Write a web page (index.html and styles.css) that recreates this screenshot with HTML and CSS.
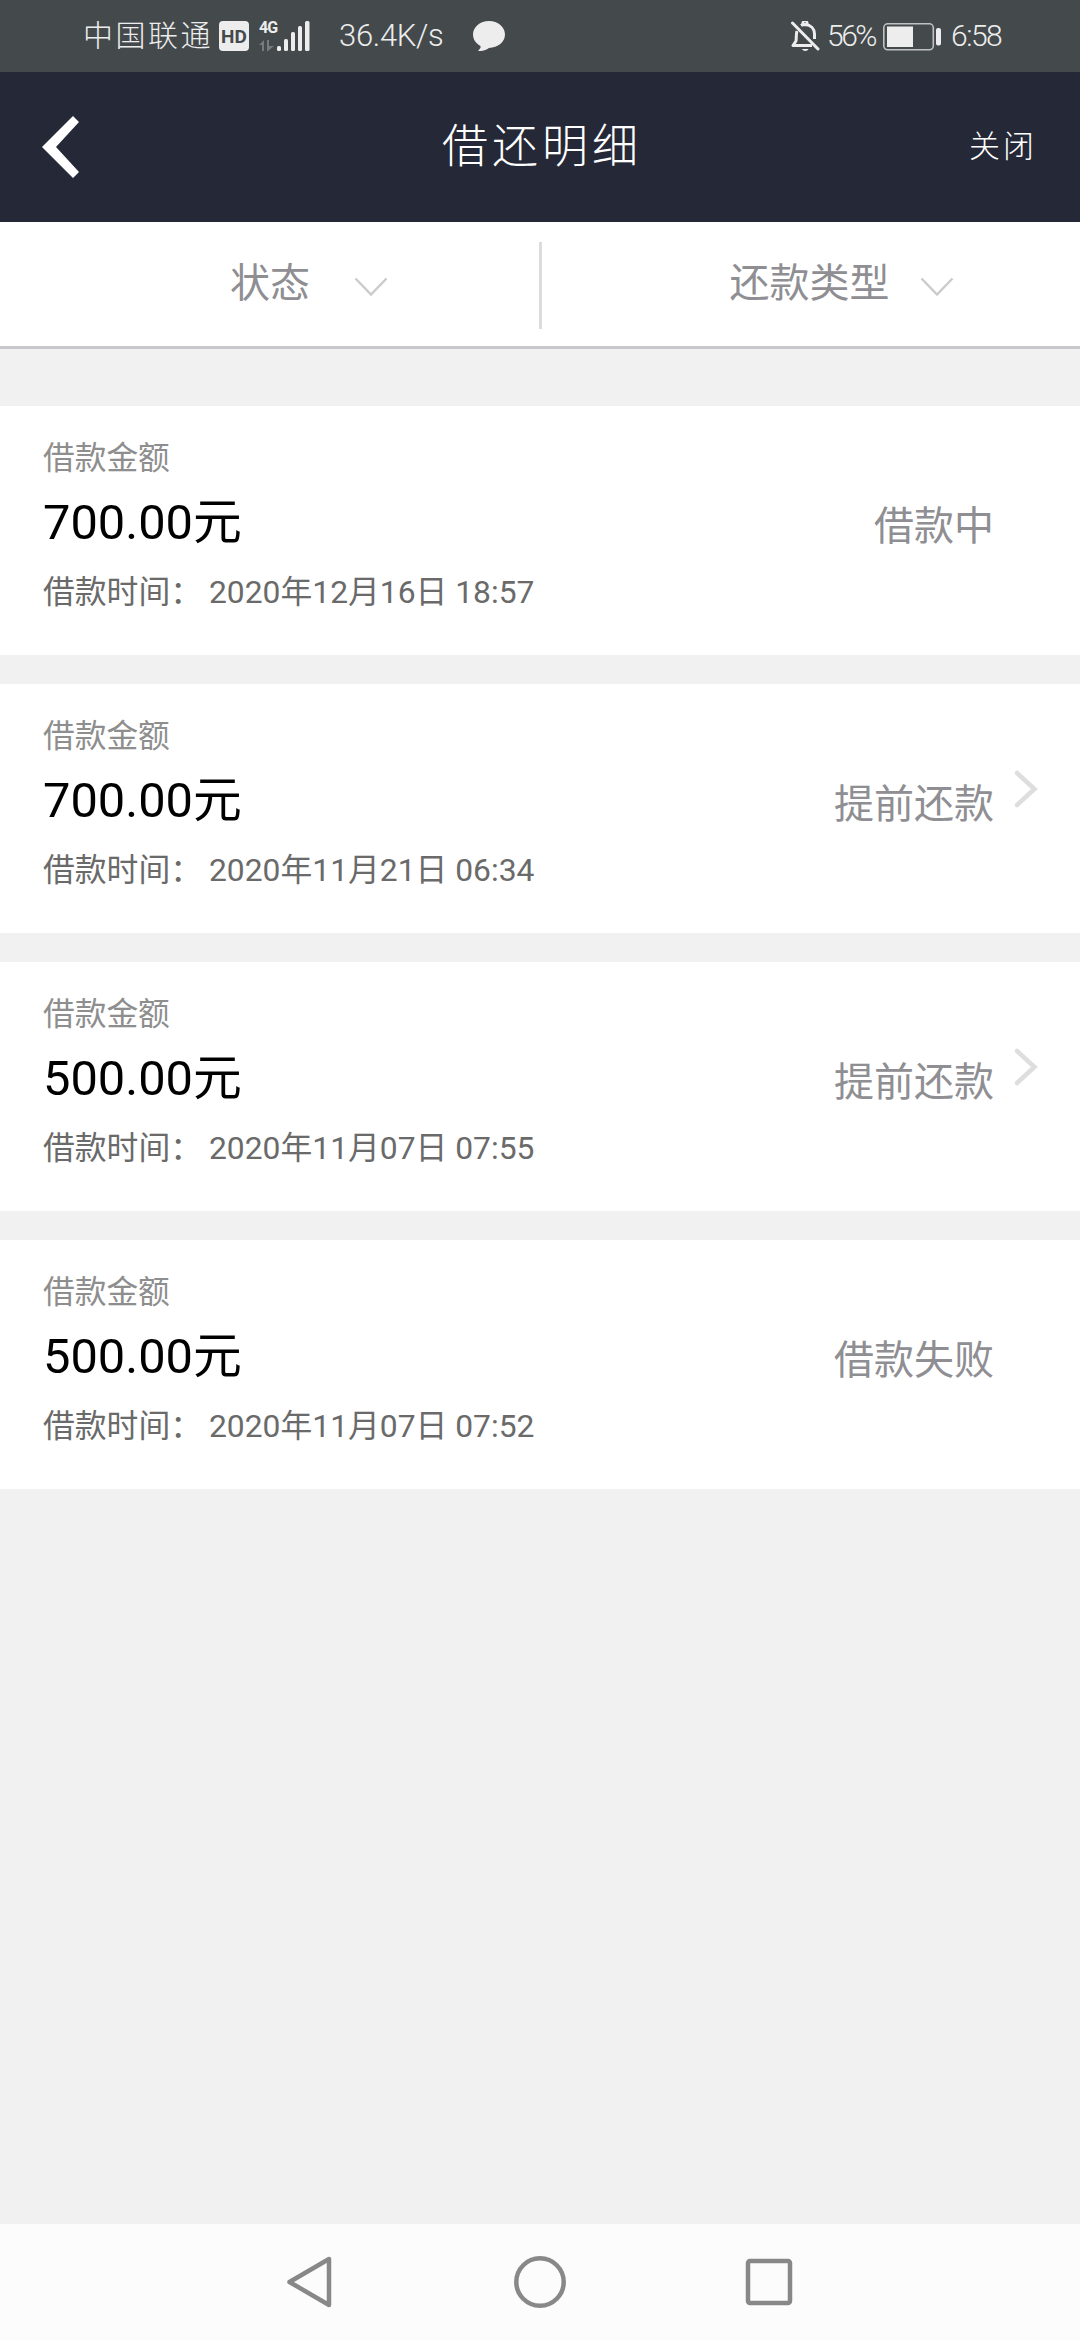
FILE: index.html
```html
<!DOCTYPE html>
<html lang="zh-CN">
<head>
    <meta charset="UTF-8">
    <meta name="viewport" content="width=device-width, initial-scale=1.0">
    <title>借还明细</title>
    <link rel="stylesheet" href="styles.css">
</head>
<body>
    <!-- Status Bar -->
    <div class="status-bar">
        <span class="carrier">中国联通</span>
        <span class="hd">HD</span>
        <div class="signal">
            <div class="network">
                <span class="network-type">4G</span>
                <svg class="data-arrows" width="15" height="11" viewBox="0 0 15 11">
                    <path d="M0 5L5 0V11H3V5ZM8 0H10V6H15L9 11H8Z" fill="#777b7d"/>
                </svg>
            </div>
            <svg class="bars" width="33" height="30" viewBox="0 0 33 30" fill="#ededed">
                <rect x="0" y="25" width="4" height="5" rx="1.5"/>
                <rect x="7" y="18" width="4" height="12" rx="1.5"/>
                <rect x="14" y="11" width="4" height="19" rx="1.5"/>
                <rect x="21" y="5" width="4" height="25" rx="1.5"/>
                <rect x="28" y="0" width="4.5" height="30" rx="1.5"/>
            </svg>
        </div>
        <span class="speed">36.4K/s</span>
        <svg class="bubble" width="32" height="30" viewBox="0 0 32 30">
            <path d="M16 0C25 0 32 6 32 13.500C32 21 25 26.500 16 27C13 29.500 9 30 5 30C7 28 8 26.500 7.500 25C3 22.500 0 18.500 0 13.500C0 6 7 0 16 0Z" fill="#ededed"/>
        </svg>
        <div class="status-right">
            <svg class="bell" width="29" height="31" viewBox="0 0 29 31" fill="none" stroke="#ededed" stroke-width="3">
                <path d="M1.500 2L27 28" stroke-linecap="round"/>
                <path d="M10 4.500C11.500 3.500 12.500 3.500 14 3.500C20 4 23.500 8 23.500 13V18"/>
                <path d="M6 10C5 13 5.500 17 5 20L2 24.500H21" stroke-linejoin="round"/>
                <path d="M12 3.500A2.300 2.300 0 1 1 16 3.500" stroke-width="2.500"/>
                <path d="M11 28H17.500C16.500 30.500 12 30.500 11 28Z" fill="#ededed" stroke="none"/>
            </svg>
            <span class="percent">56%</span>
            <svg class="battery" width="58" height="28" viewBox="0 0 58 28">
                <rect x="0.800" y="0.800" width="49.500" height="26" rx="4" fill="none" stroke="#bfc1c2" stroke-width="1.600"/>
                <rect x="4" y="3.500" width="26" height="20.500" fill="#ededed"/>
                <rect x="53" y="5" width="5" height="17.500" rx="2" fill="#ededed"/>
            </svg>
            <span class="time">6:58</span>
        </div>
    </div>

    <!-- Header -->
    <div class="header">
        <svg class="back" width="38" height="62" viewBox="0 0 38 62">
            <path d="M31 0L37 6L14 31L37 56L31 62L0 31Z" fill="#fff"/>
        </svg>
        <h1>借还明细</h1>
        <span class="close">关闭</span>
    </div>

    <!-- Filters -->
    <div class="filters">
        <div class="filter filter-state">
            <span>状态</span>
            <svg class="down" width="34" height="20" viewBox="0 0 34 20">
                <path d="M1.500 1.500L17 17.500L32.500 1.500" fill="none" stroke="#cbcbcd" stroke-width="2.400"/>
            </svg>
        </div>
        <div class="divider"></div>
        <div class="filter filter-type">
            <span>还款类型</span>
            <svg class="down" width="34" height="20" viewBox="0 0 34 20">
                <path d="M1.500 1.500L17 17.500L32.500 1.500" fill="none" stroke="#cbcbcd" stroke-width="2.400"/>
            </svg>
        </div>
    </div>

    <!-- Loan Records -->
    <div class="list">
        <div class="card">
            <div class="info">
                <p class="label">借款金额</p>
                <p class="amount">700.00元</p>
                <p class="date"><span class="date-label">借款时间：</span>2020年12月16日 18:57</p>
            </div>
            <span class="state">借款中</span>
        </div>
        <div class="card">
            <div class="info">
                <p class="label">借款金额</p>
                <p class="amount">700.00元</p>
                <p class="date"><span class="date-label">借款时间：</span>2020年11月21日 06:34</p>
            </div>
            <span class="state">提前还款</span>
            <svg class="arrow" width="24" height="38" viewBox="0 0 24 38">
                <path d="M3 3L20.500 19L3 35" fill="none" stroke="#dedede" stroke-width="4.500" stroke-linecap="round"/>
            </svg>
        </div>
        <div class="card">
            <div class="info">
                <p class="label">借款金额</p>
                <p class="amount">500.00元</p>
                <p class="date"><span class="date-label">借款时间：</span>2020年11月07日 07:55</p>
            </div>
            <span class="state">提前还款</span>
            <svg class="arrow" width="24" height="38" viewBox="0 0 24 38">
                <path d="M3 3L20.500 19L3 35" fill="none" stroke="#dedede" stroke-width="4.500" stroke-linecap="round"/>
            </svg>
        </div>
        <div class="card">
            <div class="info">
                <p class="label">借款金额</p>
                <p class="amount">500.00元</p>
                <p class="date"><span class="date-label">借款时间：</span>2020年11月07日 07:52</p>
            </div>
            <span class="state">借款失败</span>
        </div>
    </div>

    <!-- Navigation Bar -->
    <div class="nav-bar">
        <svg width="52" height="52" viewBox="0 0 52 52">
            <path d="M44 3V49L4.500 26Z"/>
        </svg>
        <svg width="52" height="52" viewBox="0 0 52 52">
            <circle cx="26" cy="26" r="23.700"/>
        </svg>
        <svg width="52" height="52" viewBox="0 0 52 52">
            <rect x="5" y="5" width="42" height="42" rx="2"/>
        </svg>
    </div>
</body>
</html>
```
FILE: styles.css
```css
* {
    box-sizing: border-box;
}
body {
    font-family: Roboto, 'Noto Sans CJK SC', sans-serif;
    background-color: #f1f1f1;
    margin: 0;
    height: 2340px;
    display: flex;
    flex-direction: column;
    overflow: hidden;
}
svg {
    display: block;
    flex-shrink: 0;
}
h1, p {
    margin: 0;
    font-weight: normal;
}

/* Status Bar */
.status-bar {
    height: 72px;
    padding: 0 78px 0 83px;
    background-color: #44494c;
    color: #ededed;
    display: flex;
    align-items: center;
    font-weight: 300;
    font-size: 30px;
    line-height: 40px;
    white-space: nowrap;
}
.carrier {
    width: 136px;
    letter-spacing: 2.5px;
}
.hd {
    width: 30px;
    height: 30px;
    border-radius: 4px;
    background-color: #ededed;
    color: #44494c;
    font-size: 19px;
    font-weight: 700;
    line-height: 31px;
    text-align: center;
}
.signal {
    display: flex;
    width: 80px;
    height: 30px;
    margin-left: 10px;
}
.network {
    width: 18px;
    height: 30px;
    display: flex;
    flex-direction: column;
    justify-content: space-between;
}
.network-type {
    font-size: 16px;
    font-weight: 700;
    line-height: 14px;
    letter-spacing: -1px;
}
.speed {
    width: 134px;
    font-size: 31px;
    letter-spacing: -0.3px;
}
.status-right {
    display: flex;
    align-items: center;
    margin-left: auto;
}
.percent {
    width: 56px;
    margin-left: 7px;
    letter-spacing: -2.5px;
}
.battery {
    margin: 1px 10px 0 0;
}
.time {
    width: 51px;
    letter-spacing: -1.5px;
}

/* Header */
.header {
    height: 150px;
    padding: 0 46px 0 42px;
    background-color: #252836;
    color: #fff;
    display: grid;
    grid-template-columns: 150px 1fr 146px;
    align-items: center;
}
.header h1 {
    font-size: 46px;
    font-weight: 300;
    line-height: 60px;
    letter-spacing: 4px;
    text-align: center;
    padding: 0 0 3px 4px;
}
.close {
    font-size: 31px;
    font-weight: 300;
    letter-spacing: 3px;
    margin: 0 -3px 8px 0;
    text-align: right;
}

/* Filters */
.filters {
    height: 127px;
    background-color: #fff;
    border-bottom: 3px solid #c8c7cc;
    display: flex;
    align-items: center;
    color: #8e8e93;
    font-size: 40px;
    line-height: 60px;
}
.filter {
    width: 539px;
    display: flex;
    align-items: center;
}
.filter-state {
    padding-left: 230px;
}
.filter-state .down {
    margin-left: 44px;
}
.filter-type {
    padding-left: 188px;
}
.filter-type .down {
    margin-left: 30px;
}
.down {
    margin-top: 6px;
}
.divider {
    width: 3px;
    height: 87px;
    background-color: #dcdcdc;
    margin-top: 3px;
}

/* Loan Records */
.list {
    flex: 1;
    padding-top: 57px;
    display: flex;
    flex-direction: column;
    gap: 29px;
}
.card {
    height: 249px;
    padding: 30px 86px 0 43px;
    background-color: #fff;
    display: flex;
    position: relative;
}
.info {
    flex: 1;
}
.label {
    color: #8e8e8e;
    font-size: 31.7px;
    line-height: 46px;
}
.amount {
    color: #000;
    font-size: 48.8px;
    line-height: 70px;
    margin-top: 6px;
}
.date {
    color: #6a6a6a;
    font-size: 31.8px;
    line-height: 46px;
    margin-top: 11px;
}
.date-label {
    display: inline-block;
    width: 166px;
}
.state {
    color: #8e8e93;
    font-size: 40px;
    line-height: 60px;
    margin-top: 61px;
}
/* arrow sits in the right padding of the card */
.arrow {
    position: absolute;
    right: 42px;
    top: 86px;
}

/* Navigation Bar */
.nav-bar {
    height: 116px;
    background-color: #fcfcfc;
    display: flex;
    justify-content: center;
    align-items: center;
    gap: 177px;
}
.nav-bar svg {
    fill: none;
    stroke: #888;
    stroke-width: 4.5px;
    stroke-linejoin: round;
}
```
